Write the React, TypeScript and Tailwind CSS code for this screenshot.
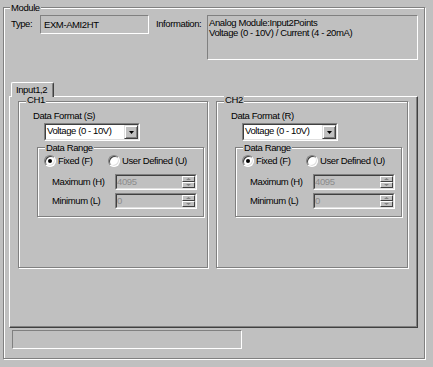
import type { ReactNode } from 'react';

// etched frame with caption sitting on the top line
function Group({ label, className, labelPos, children }: { label: string; className: string; labelPos: string; children?: ReactNode }) {
  return (
    <div className={`relative shrink-0 border border-[#808080] shadow-[inset_1px_1px_0_#fff,1px_1px_0_#fff] ${className}`}>
      <span className={`absolute px-[1px] bg-[#c0c0c0] leading-[12px] whitespace-nowrap ${labelPos}`}>{label}</span>
      {children}
    </div>
  );
}

function Radio({ checked }: { checked?: boolean }) {
  return (
    <div className="w-[12px] h-[12px] shrink-0 rounded-full bg-white border border-t-[#808080] border-l-[#808080] border-r-white border-b-white shadow-[inset_1px_1px_0_#404040,inset_-1px_-1px_0_#dfdfdf] flex items-center justify-center">
      {checked && <div className="w-[4px] h-[4px] rounded-full bg-black" />}
    </div>
  );
}

function SpinButton({ up }: { up?: boolean }) {
  return (
    <div className="flex-1 bg-[#c0c0c0] border-t border-l border-t-white border-l-white border-b border-r border-b-[#404040] border-r-[#404040] flex items-center justify-center">
      <svg width="5" height="2" viewBox="0 0 5 2">
        {up ? <polygon points="0,2 5,2 2.5,0" fill="#808080" /> : <polygon points="0,0 5,0 2.5,2" fill="#808080" />}
      </svg>
    </div>
  );
}

function Spin({ value }: { value: string }) {
  return (
    <div className="w-[82px] h-[16px] border border-t-[#808080] border-l-[#808080] border-r-white border-b-white">
      <div className="h-full flex border border-t-[#404040] border-l-[#404040] border-r-[#dfdfdf] border-b-[#dfdfdf]">
        <div className="flex-1 leading-[12px] text-[#8c8c8c]">{value}</div>
        <div className="w-[13px] h-full flex flex-col">
          <SpinButton up />
          <SpinButton />
        </div>
      </div>
    </div>
  );
}

function Combo({ value }: { value: string }) {
  return (
    <div className="ml-[25px] mt-[1px] w-[96px] h-[18px] border border-t-[#808080] border-l-[#808080] border-r-white border-b-white">
      <div className="h-full flex bg-white border border-t-[#404040] border-l-[#404040] border-r-[#dfdfdf] border-b-[#dfdfdf]">
        <div className="flex-1 pl-[1px] leading-[12px] whitespace-nowrap">{value}</div>
        <div className="w-[14px] h-full bg-[#c0c0c0] border border-t-[#dfdfdf] border-l-[#dfdfdf] border-r-[#404040] border-b-[#404040] shadow-[inset_1px_1px_0_#fff,inset_-1px_-1px_0_#808080] flex items-center justify-center">
          <svg width="5" height="3" viewBox="0 0 5 3">
            <polygon points="0,0 5,0 2.5,3" fill="#000" />
          </svg>
        </div>
      </div>
    </div>
  );
}

function Channel({ name, key2, width }: { name: string; key2: string; width: string }) {
  return (
    <Group label={name} className={`${width} h-[167px]`} labelPos="-top-[8px] left-[7px]">
      <div className="ml-[14px] mt-[8px] leading-[12px]">Data Format ({key2})</div>
      <Combo value="Voltage (0 - 10V)" />
      <Group label="Data Range" className="ml-[18px] mt-[6px] w-[167px] h-[70px]" labelPos="-top-[6px] left-[7px]">
        <div className="flex items-center mt-[7px] pl-[6px] leading-[12px]">
          <div className="w-[64px] flex items-center">
            <Radio checked />
            <span className="ml-[2px]">Fixed (F)</span>
          </div>
          <Radio />
          <span className="ml-[2px] whitespace-nowrap">User Defined (U)</span>
        </div>
        <div className="flex items-center mt-[7px] pl-[14px]">
          <div className="w-[63px] leading-[12px]">Maximum (H)</div>
          <Spin value="4095" />
        </div>
        <div className="flex items-center mt-[3px] pl-[14px]">
          <div className="w-[63px] leading-[12px]">Minimum (L)</div>
          <Spin value="0" />
        </div>
      </Group>
    </Group>
  );
}

export default function App() {
  return (
    <div
      className="w-[433px] h-[367px] bg-[#c0c0c0] pt-[7px] pl-[3px] text-[9.5px] tracking-[-0.4px] text-black overflow-hidden"
      style={{ fontFamily: '"Liberation Sans", Arial, sans-serif' }}
    >
      <Group label="Module" className="w-[422px] h-[352px]" labelPos="-top-[6px] left-[6px]">
        {/* type / information */}
        <div className="flex items-start mt-[7px] pl-[7px]">
          <div className="w-[29px] mt-[3px] leading-[12px]">Type:</div>
          <div className="w-[109px] h-[19px] pt-[3px] pl-[3px] leading-[12px] border border-t-[#808080] border-l-[#808080] border-r-white border-b-white">
            EXM-AMI2HT
          </div>
          <div className="w-[51px] ml-[7px] mt-[3px] leading-[12px]">Information:</div>
          <div className="w-[211px] h-[45px] pt-[2px] pl-[1px] leading-[10px] border border-t-[#808080] border-l-[#808080] border-r-white border-b-white">
            <div>Analog Module:Input2Points</div>
            <div>Voltage (0 - 10V) / Current (4 - 20mA)</div>
          </div>
        </div>

        {/* tab control */}
        <div className="ml-[5px] mt-[22px] w-[409px]">
          <div className="flex pl-[2px]">
            <div className="relative z-10 -mb-[1px] w-[43px] h-[15px] pt-[1px] pl-[4px] leading-[12px] bg-[#c0c0c0] rounded-t-[2px] border-l border-t border-r border-l-white border-t-white border-r-[#404040] shadow-[inset_-1px_0_0_#808080]">
              Input1,2
            </div>
          </div>
          <div className="h-[232px] flex items-start gap-[8px] pl-[8px] pt-[4px] border border-l-white border-t-white border-r-[#404040] border-b-[#404040] shadow-[inset_-1px_-1px_0_#808080]">
            <Channel name="CH1" key2="S" width="w-[190px]" />
            <Channel name="CH2" key2="R" width="w-[192px]" />
          </div>
          <div className="ml-[3px] mt-[2px] w-[230px] h-[19px] border border-t-[#808080] border-l-[#808080] border-r-white border-b-white" />
        </div>
      </Group>
    </div>
  );
}
